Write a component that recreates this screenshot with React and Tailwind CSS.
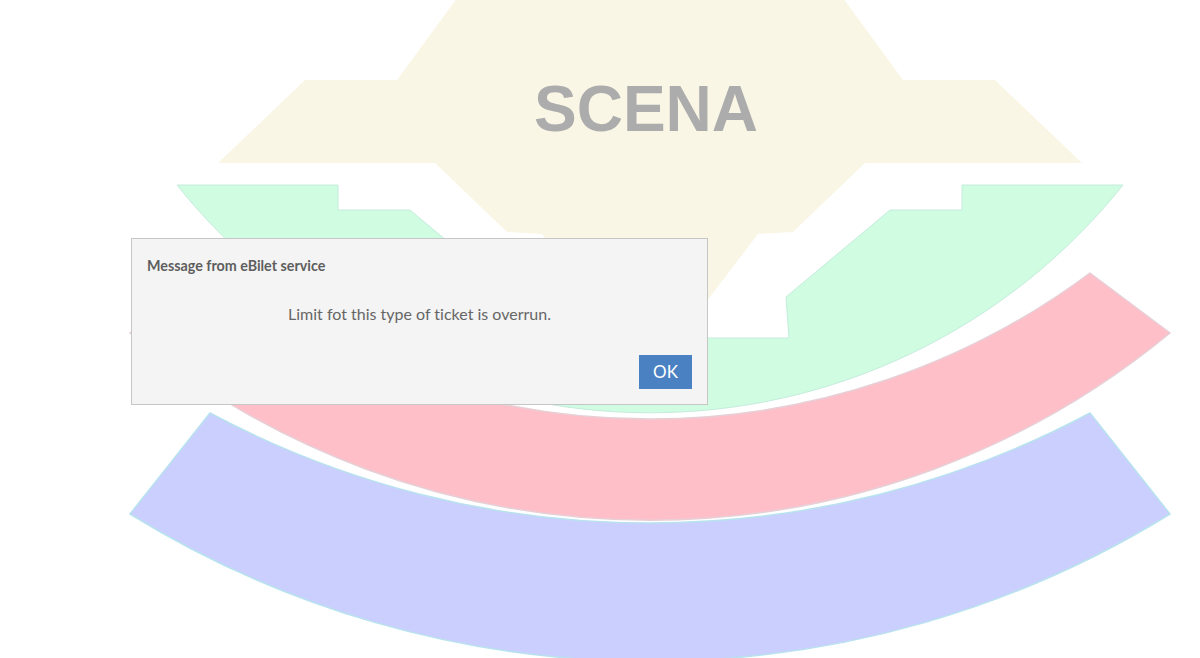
import React from "react";

function SeatMap() {
  return (
    <svg width="1200" height="658" viewBox="0 0 1200 658" className="block">
      {/* Stage */}
      <path
        d="M457 -2 L843 -2 L903 80 L995 80 L1082 163 L865 163 L793 232 L758 234 L700 310 L600 310 L542 234 L507 232 L435 163 L218 163 L305 80 L397 80 Z"
        fill="#faf6e6"
      />
      <text
        x="646"
        y="131"
        textAnchor="middle"
        fontFamily="'Liberation Sans', Arial, sans-serif"
        fontWeight="700"
        fontSize="64"
        fill="#acacac"
      >
        SCENA
      </text>
      {/* Green section */}
      <path
        d="M177 185 L338 185 L338 210 L410 210 L514 297 L511 338 L789 338 L786 297 L890 210 L962 210 L962 185 L1123 185 A605 605 0 0 1 177 185 Z"
        fill="#d0fce2"
        stroke="#c4ecdc"
        strokeWidth="1"
      />
      {/* Red section */}
      <path
        d="M1090 273 L1170 333 A816 816 0 0 1 130 333 L210 273 A736 736 0 0 0 1090 273 Z"
        fill="#ffbfc8"
        stroke="#e6cfd6"
        strokeWidth="1.5"
      />
      {/* Blue section */}
      <path
        d="M1090 413 L1170 514 A991 991 0 0 1 130 514 L210 413 A935 935 0 0 0 1090 413 Z"
        fill="#cbcffe"
        stroke="#b8e2ee"
        strokeWidth="1.5"
      />
    </svg>
  );
}

export default function App() {
  return (
    <div className="relative w-[1200px] h-[658px] overflow-hidden bg-white">
      <SeatMap />
      <div
        className="absolute left-[131px] top-[238px] w-[577px] h-[167px] bg-[#f4f4f4] border border-[#c6c6c6] flex flex-col [font-variant-ligatures:none]"
        style={{ fontFamily: "Lato, 'Open Sans', sans-serif" }}
      >
        <div className="px-[15px] pt-[18px] text-[14.3px] leading-[18px] font-bold text-[#5e5e5e]">
          Message from eBilet service
        </div>
        <div className="mt-[27px] text-center text-[16px] leading-[24px] text-[#666666]">
          Limit fot this type of ticket is overrun.
        </div>
        <div className="flex justify-end pr-[15px] mt-[29px]">
          <button className="w-[53px] h-[34px] bg-[#4a81c3] text-white text-[17px] leading-[34px] flex items-center justify-center">
            OK
          </button>
        </div>
      </div>
    </div>
  );
}
